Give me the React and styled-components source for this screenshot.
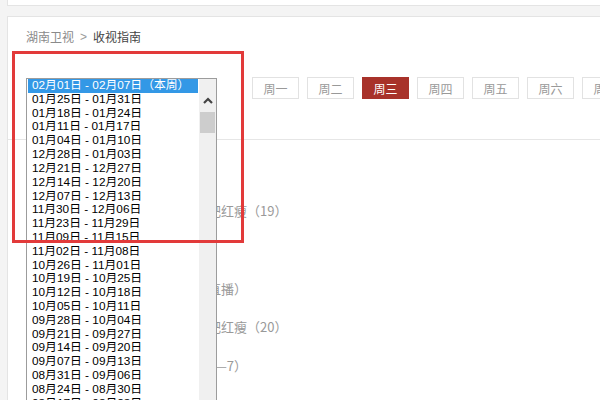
import styled, { createGlobalStyle } from "styled-components";

const GlobalStyle = createGlobalStyle`
  html, body {
    margin: 0;
    padding: 0;
    width: 600px;
    height: 400px;
    overflow: hidden;
    background: #f4f4f4;
  }
  * {
    box-sizing: border-box;
  }
`;

const weeks = [
  "02月01日 - 02月07日（本周）",
  "01月25日 - 01月31日",
  "01月18日 - 01月24日",
  "01月11日 - 01月17日",
  "01月04日 - 01月10日",
  "12月28日 - 01月03日",
  "12月21日 - 12月27日",
  "12月14日 - 12月20日",
  "12月07日 - 12月13日",
  "11月30日 - 12月06日",
  "11月23日 - 11月29日",
  "11月09日 - 11月15日",
  "11月02日 - 11月08日",
  "10月26日 - 11月01日",
  "10月19日 - 10月25日",
  "10月12日 - 10月18日",
  "10月05日 - 10月11日",
  "09月28日 - 10月04日",
  "09月21日 - 09月27日",
  "09月14日 - 09月20日",
  "09月07日 - 09月13日",
  "08月31日 - 09月06日",
  "08月24日 - 08月30日",
  "08月17日 - 08月23日",
];

const days = ["周一", "周二", "周三", "周四", "周五", "周六", "周日"];

const programs = [
  { time: "06:00", title: "湖南新闻联播" },
  { time: "07:30", title: "知否知否应是绿肥红瘦（19）" },
  { time: "09:20", title: "晚间新闻" },
  { time: "10:00", title: "天天向上春节（直播）" },
  { time: "12:00", title: "知否知否应是绿肥红瘦（20）" },
  { time: "13:40", title: "金鹰独播剧场（1—7）" },
];

const App = () => {
  return (
    <Page>
      <GlobalStyle />
      <TopBar />
      <Card>
        <Breadcrumb>
          <Crumb>湖南卫视</Crumb>
          <Sep>&gt;</Sep>
          <Current>收视指南</Current>
        </Breadcrumb>
        <FilterRow>
          <SelectAnchor>
            <Popup>
              <Options>
                {weeks.map((w, i) => (
                  <Option key={w} $selected={i === 0}>
                    {w}
                  </Option>
                ))}
              </Options>
              <ScrollTrack>
                <ArrowButton>
                  <svg width="10" height="7" viewBox="0 0 10 7">
                    <polyline
                      points="1,6 5,2 9,6"
                      fill="none"
                      stroke="#444"
                      strokeWidth="2.2"
                    />
                  </svg>
                </ArrowButton>
                <Thumb />
              </ScrollTrack>
            </Popup>
          </SelectAnchor>
          <Tabs>
            {days.map((d) => (
              <Tab key={d} $active={d === "周三"}>
                {d}
              </Tab>
            ))}
          </Tabs>
        </FilterRow>
        <ProgramList>
          {programs.map((p) => (
            <ProgramRow key={p.title}>
              <Time>{p.time}</Time>
              <Title>{p.title}</Title>
            </ProgramRow>
          ))}
        </ProgramList>
      </Card>
      <Annotation />
    </Page>
  );
};

export default App;

const Page = styled.div`
  position: relative;
  width: 600px;
  height: 400px;
  overflow: hidden;
  font-family: "Noto Sans CJK SC", "Liberation Sans", sans-serif;
`;

const TopBar = styled.div`
  height: 6px;
  margin-left: 7px;
  background: #fff;
  border-left: 1px solid #e4e4e4;
  border-bottom: 1px solid #e4e4e4;
`;

const Card = styled.div`
  margin: 10px 0 0 7px;
  min-height: 400px;
  background: #fff;
  border: 1px solid #e4e4e4;
  border-right: none;
`;

const Breadcrumb = styled.div`
  display: flex;
  align-items: center;
  gap: 6px;
  padding: 10px 0 0 18px;
  height: 30px;
  font-size: 12px;
  line-height: 20px;
`;

const Crumb = styled.span`
  color: #8a8a8a;
`;

const Sep = styled.span`
  color: #9a9a9a;
  font-family: "Liberation Sans", sans-serif;
`;

const Current = styled.span`
  color: #444;
`;

const FilterRow = styled.div`
  display: flex;
  align-items: flex-start;
  margin-top: 30px;
  padding: 0 0 40px 18px;
  border-bottom: 1px solid #e6e6e6;
`;

const SelectAnchor = styled.div`
  position: relative;
  flex-shrink: 0;
  width: 191px;
  height: 22px;
  margin-right: 35px;
`;

const Popup = styled.div`
  position: absolute;
  top: 1px;
  left: 0;
  z-index: 5;
  width: 191px;
  height: 330px;
  display: flex;
  overflow: hidden;
  background: #fff;
  border: 1px solid #9c9c9c;
  border-bottom: none;
`;

const Options = styled.div`
  flex: 1;
  padding-left: 1px;
  padding-right: 1px;
  font-family: "Liberation Sans", "Noto Sans CJK SC", sans-serif;
  font-size: 11.8px;
`;

const Option = styled.div`
  height: 13.82px;
  line-height: 13.82px;
  padding-left: 4px;
  white-space: nowrap;
  color: ${({ $selected }) => ($selected ? "#fff" : "#000")};
  background: ${({ $selected }) => ($selected ? "#3398e6" : "transparent")};
`;

const ScrollTrack = styled.div`
  flex-shrink: 0;
  width: 17px;
  display: flex;
  flex-direction: column;
  align-items: center;
  padding-top: 13px;
  background: #f0f0f0;
`;

const ArrowButton = styled.div`
  width: 17px;
  height: 17px;
  display: flex;
  align-items: center;
  justify-content: center;
`;

const Thumb = styled.div`
  width: 15px;
  height: 21px;
  margin-top: 3px;
  background: #cdcdcd;
`;

const Tabs = styled.div`
  display: flex;
  gap: 8px;
`;

const Tab = styled.div`
  flex-shrink: 0;
  width: 47px;
  height: 22px;
  display: flex;
  align-items: center;
  justify-content: center;
  font-size: 12px;
  color: ${({ $active }) => ($active ? "#fff" : "#999")};
  background: ${({ $active }) => ($active ? "#a8322a" : "#fff")};
  border: 1px solid ${({ $active }) => ($active ? "#a8322a" : "#e2e2e2")};
`;

const ProgramList = styled.div`
  padding: 13px 0 0 42px;
`;

const ProgramRow = styled.div`
  display: flex;
  align-items: center;
  height: 38.6px;
  font-size: 13px;
  color: #999;
`;

const Time = styled.span`
  width: 67px;
  flex-shrink: 0;
`;

const Title = styled.span`
  white-space: nowrap;
`;

const Annotation = styled.div`
  position: absolute;
  left: 12px;
  top: 51px;
  z-index: 10;
  width: 232px;
  height: 192px;
  border: 3px solid #e23a3a;
  pointer-events: none;
`;
